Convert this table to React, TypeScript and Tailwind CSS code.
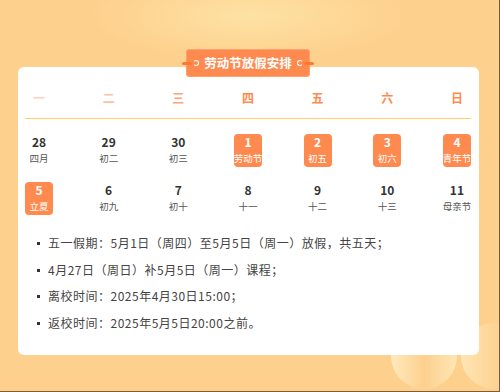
const WEEK = [
  { t: "一", c: "text-[#fdd3bd]" },
  { t: "二", c: "text-[#fdc1a3]" },
  { t: "三", c: "text-[#ffa477]" },
  { t: "四", c: "text-[#ff8a50]" },
  { t: "五", c: "text-[#ff8a50]" },
  { t: "六", c: "text-[#ff8a50]" },
  { t: "日", c: "text-[#ff8a50]" },
];

type Day = { n: number; s: string; hot?: boolean };

const ROWS: Day[][] = [
  [
    { n: 28, s: "四月" },
    { n: 29, s: "初二" },
    { n: 30, s: "初三" },
    { n: 1, s: "劳动节", hot: true },
    { n: 2, s: "初五", hot: true },
    { n: 3, s: "初六", hot: true },
    { n: 4, s: "青年节", hot: true },
  ],
  [
    { n: 5, s: "立夏", hot: true },
    { n: 6, s: "初九" },
    { n: 7, s: "初十" },
    { n: 8, s: "十一" },
    { n: 9, s: "十二" },
    { n: 10, s: "十三" },
    { n: 11, s: "母亲节" },
  ],
];

const NOTES = [
  "五一假期：5月1日（周四）至5月5日（周一）放假，共五天；",
  "4月27日（周日）补5月5日（周一）课程；",
  "离校时间：2025年4月30日15:00；",
  "返校时间：2025年5月5日20:00之前。",
];

function Cell({ d }: { d: Day }) {
  return (
    <div
      className={`w-7 h-[33px] flex flex-col items-center rounded-[4px] ${
        d.hot ? "bg-[#ff8a50] text-white" : "text-[#333]"
      }`}
    >
      <span className="text-[12px] leading-[16px] font-bold">{d.n}</span>
      <span
        className={`text-[9.5px] leading-[16px] whitespace-nowrap ${
          d.hot ? "text-white" : "text-[#555]"
        }`}
      >
        {d.s}
      </span>
    </div>
  );
}

export default function App() {
  return (
    <div
      className="relative w-[500px] h-[392px] overflow-hidden border-r border-b border-[#7d5c38] bg-[#fed08d] bg-[radial-gradient(ellipse_160px_45px_at_50%_4%,#fde2a4_0%,#fed08d_100%)]"
      style={{ fontFamily: '"Noto Sans CJK SC", "Noto Sans", sans-serif' }}
    >
      {/* bottom-right decorative half circles */}
      <div className="absolute left-[391px] top-[323px] w-[66px] h-[66px] rounded-full bg-[linear-gradient(90deg,#ffe9bd_0%,#fdd08f_50%,#ffe6b4_100%)]" />
      <div className="absolute left-[461px] top-[323px] w-[66px] h-[66px] rounded-full bg-[linear-gradient(90deg,#ffe6b4_0%,#fdd08f_60%)]" />

      <div className="pt-[67px] pl-[18px]">
        <div className="relative w-[461px] h-[288px] bg-white rounded-md">
          {/* title badge */}
          <div className="absolute left-[164px] -top-[18px] flex items-center">
            <div className="w-[10px] h-[3px] bg-[#ff7a2e] rounded-full -mr-[6px] z-10" />
            <div className="relative h-[28px] w-[124px] rounded-[3px] bg-[#ff8a50] border border-[#ffa070] flex items-center justify-center">
              <span className="absolute left-[6px] top-[10px] w-[6px] h-[6px] rounded-full border-[1.5px] border-white border-l-transparent" />
              <span className="text-white text-[12.5px] font-bold">劳动节放假安排</span>
              <span className="absolute right-[6px] top-[10px] w-[6px] h-[6px] rounded-full border-[1.5px] border-white border-r-transparent" />
            </div>
            <div className="w-[10px] h-[3px] bg-[#ff7a2e] rounded-full -ml-[6px] z-10" />
          </div>

          <div className="px-[7px] pr-[8px]">
            <div className="pt-[23px] pb-[12px] border-b border-[#fdd06a] flex justify-between">
              {WEEK.map((w) => (
                <span key={w.t} className={`w-7 text-center text-[12px] leading-4 font-bold ${w.c}`}>
                  {w.t}
                </span>
              ))}
            </div>

            <div className="pt-[15px] flex flex-col gap-[15px]">
              {ROWS.map((r, i) => (
                <div key={i} className="flex justify-between">
                  {r.map((d) => (
                    <Cell key={d.n} d={d} />
                  ))}
                </div>
              ))}
            </div>
          </div>

          <ul className="mt-[15px] pl-[19px]">
            {NOTES.map((n) => (
              <li key={n} className="flex items-center gap-2 text-[12px] leading-[26.67px] text-[#444] tracking-[0.5px]">
                <span className="w-[3px] h-[3px] bg-[#333] shrink-0" />
                {n}
              </li>
            ))}
          </ul>
        </div>
      </div>
    </div>
  );
}
